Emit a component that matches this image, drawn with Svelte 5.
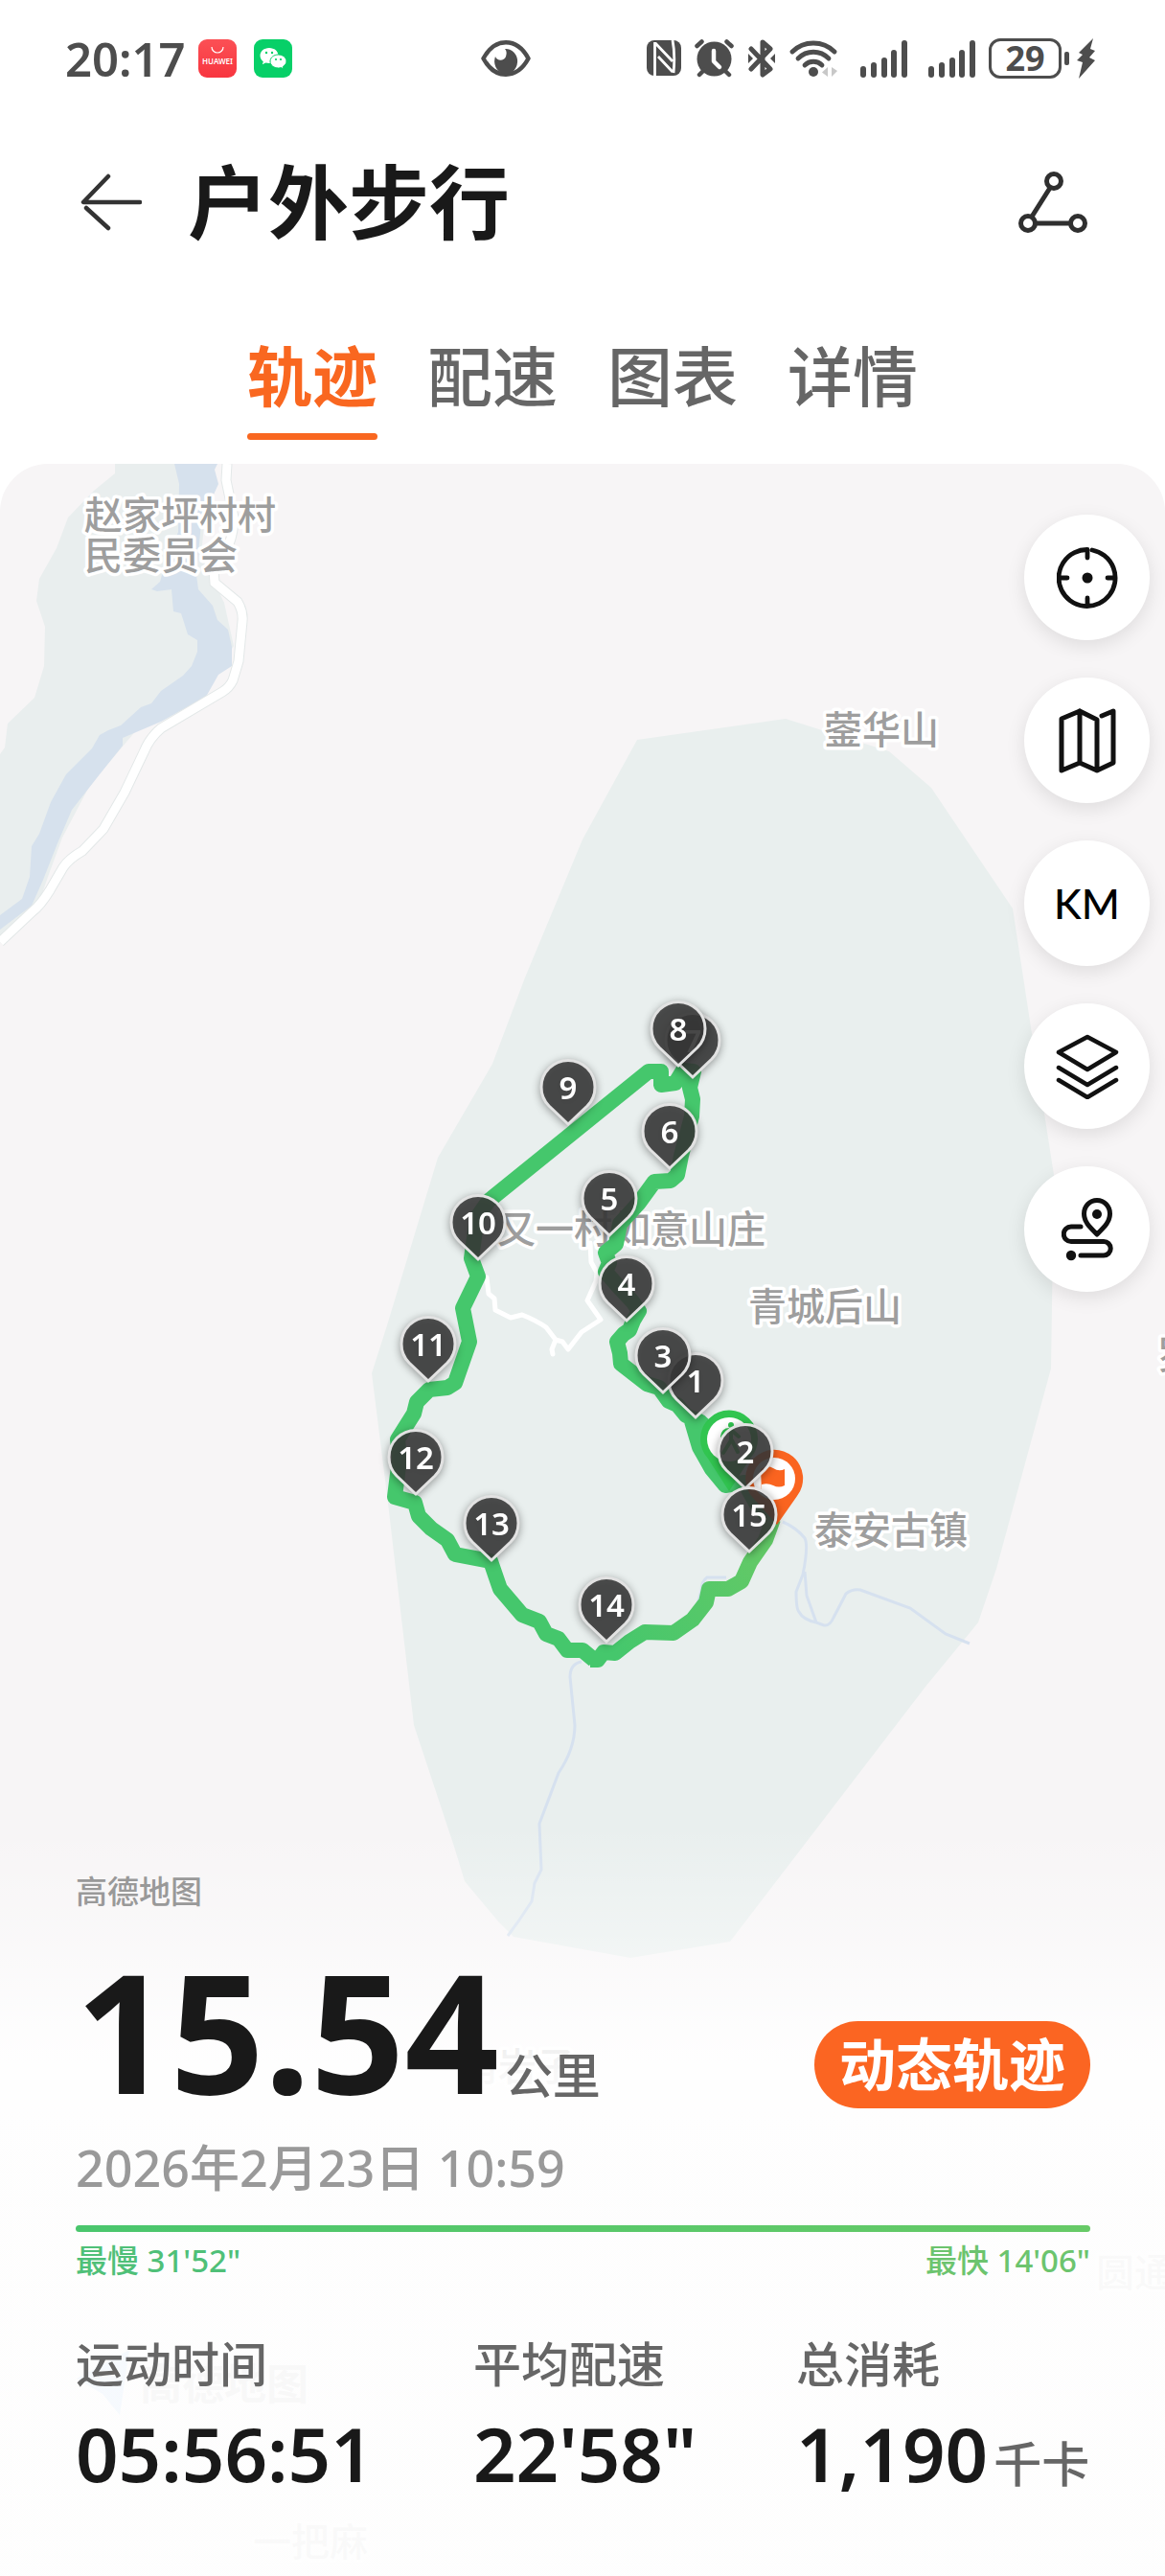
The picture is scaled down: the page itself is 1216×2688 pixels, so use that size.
<script lang="ts">
	const tabs = ["轨迹", "配速", "图表", "详情"];
	let activeTab = $state("轨迹");

	const signals = [
		{ x: 0, h: 12 },
		{ x: 11, h: 16 },
		{ x: 22, h: 21 },
		{ x: 32, h: 29 },
		{ x: 43, h: 39 },
	];

	const places = [
		{ name: "赵家坪村村", x: 88, y: 552 },
		{ name: "民委员会", x: 88, y: 594 },
		{ name: "蓥华山", x: 860, y: 776 },
		{ name: "又一村如意山庄", x: 519, y: 1297 },
		{ name: "青城后山", x: 781, y: 1378 },
		{ name: "泰安古镇", x: 850, y: 1611 },
		{ name: "罗家山", x: 1208, y: 1428 },
		{ name: "角岩子", x: 480, y: 2171 },
		{ name: "圆通寺", x: 1144, y: 2386 },
		{ name: "一把麻", x: 264, y: 2667 },
	];

	const kilometres = [
		{ n: 1, x: 726, y: 1442 },
		{ n: 2, x: 778, y: 1516 },
		{ n: 3, x: 692, y: 1416 },
		{ n: 4, x: 654, y: 1341 },
		{ n: 5, x: 636, y: 1252 },
		{ n: 6, x: 699, y: 1182 },
		{ n: 7, x: 723, y: 1087 },
		{ n: 8, x: 708, y: 1075 },
		{ n: 9, x: 593, y: 1136 },
		{ n: 10, x: 499, y: 1277 },
		{ n: 11, x: 447, y: 1404 },
		{ n: 12, x: 434, y: 1522 },
		{ n: 13, x: 513, y: 1591 },
		{ n: 14, x: 633, y: 1676 },
		{ n: 15, x: 782, y: 1582 },
	];

	const stats = [
		{ label: "运动时间", value: "05:56:51", unit: "" },
		{ label: "平均配速", value: "22'58\"", unit: "" },
		{ label: "总消耗", value: "1,190", unit: "千卡" },
	];
</script>

<svelte:head>
	<title>户外步行</title>
</svelte:head>

<main class="screen">
	<div class="status">
		<span class="clock">20:17</span>
		<svg class="app-icon" viewBox="0 0 40 40">
			<defs>
				<linearGradient id="red" x2="0" y2="1">
					<stop offset="0" stop-color="#fb5055" />
					<stop offset="1" stop-color="#f8353f" />
				</linearGradient>
			</defs>
			<rect width="40" height="40" rx="9" fill="url(#red)" />
			<path d="M14 8a6 6 0 0 0 12 0" fill="none" stroke="#fff" stroke-width="1.2" />
			<text class="tiny" x="20" y="26" text-anchor="middle">HUAWEI</text>
		</svg>
		<svg class="app-icon spaced" viewBox="0 0 40 40">
			<rect width="40" height="40" rx="9" fill="#07d068" />
			<path d="M16 9c-5.500 0-9.500 3.600-9.500 8 0 2.600 1.300 4.700 3.300 6.200l-1 3 3.500-1.700c1.200.3 2.400.5 3.700.5 5.500 0 9.500-3.600 9.500-8s-4-8-9.500-8z" fill="#fff" />
			<path d="M25.500 16c-4.700 0-8.500 3.100-8.500 7s3.800 7 8.500 7c1.100 0 2.100-.1 3-.5l2.500 1.600-.6-2.700c2.200-1.300 3.600-3.200 3.600-5.400 0-3.900-3.800-7-8.500-7z" fill="#fff" stroke="#07cc66" stroke-width="1" />
			<g fill="#07d068">
				<circle cx="13" cy="14" r="1.200" />
				<circle cx="19" cy="14" r="1.200" />
				<circle cx="23" cy="21" r="1.100" />
				<circle cx="28" cy="21" r="1.100" />
			</g>
		</svg>
		<svg class="eye" viewBox="0 0 52 38">
			<path d="M2.500 19C9 7 17 2.300 26 2.300S43 7 49.500 19C43 31 35 35.700 26 35.700S9 31 2.500 19z" fill="none" stroke="#4d4d4d" stroke-width="4.500" stroke-linejoin="round" />
			<path d="M25 9a12 13 0 1 1-10 8c2 5 9 5 11 0 1-3 1-6-1-8z" fill="#4d4d4d" />
		</svg>

		<div class="status-right">
			<svg width="36" height="38" viewBox="0 0 36 38">
				<rect width="36" height="37" rx="8" fill="#4d4d4d" />
				<path d="M8.500 2v36M9 3l18 19M12 17l15 16M27 0c2 10 2 24 1 34" fill="none" stroke="#fff" stroke-width="2.800" />
			</svg>
			<svg width="41" height="40" viewBox="0 0 41 40">
				<circle cx="20.500" cy="20.500" r="18" fill="#4d4d4d" />
				<path d="M2.500 7 7.500 2.500M33.500 2.500l5 4.500M5 37l5-5M36 37l-5-5" stroke="#4d4d4d" stroke-width="4.500" stroke-linecap="round" />
				<path d="M20 12v11l6 6" fill="none" stroke="#fff" stroke-width="4.500" stroke-linecap="round" stroke-linejoin="round" />
			</svg>
			<svg width="30" height="40" viewBox="0 0 28 40">
				<path d="m3 10 20 21-8 6V3l8 7L3 31" fill="none" stroke="#4d4d4d" stroke-width="5" stroke-linecap="round" stroke-linejoin="round" />
				<path d="M0 15v10l5-5zM28 15v10l-5-5z" fill="#4d4d4d" />
			</svg>
			<svg width="52" height="40" viewBox="0 0 52 40">
				<g fill="none" stroke="#4d4d4d" stroke-width="4.800" stroke-linecap="round">
					<path d="M3 13C15 1 35 1 47 13" />
					<path d="M9 20c9-9 23-9 32 0" />
					<path d="M16 27c5-5 13-5 18 0" />
				</g>
				<circle cx="25" cy="34" r="5" fill="#4d4d4d" />
				<path d="M40 29v10l-6-4.500zM44 29v10l6-6z" fill="#c8c8c8" />
			</svg>
			{#each [1, 2] as sim (sim)}
				<svg class="signal" width="49" height="39" viewBox="0 0 49 39">
					{#each signals as bar (bar.x)}
						<rect x={bar.x} y={39 - bar.h} width="6" height={bar.h} rx="3" fill="#4d4d4d" />
					{/each}
				</svg>
			{/each}
			<div class="battery">
				<span class="battery-level">29</span>
				<span class="battery-nub"></span>
				<svg width="20" height="42" viewBox="0 0 20 42">
					<path d="M17 0 2 15l4 2-6 6 6 2-4 17 17-19-6-3 6-7-5-2z" fill="#4d4d4d" />
				</svg>
			</div>
		</div>
	</div>

	<header class="title-bar">
		<button class="icon-button" aria-label="返回">
			<svg width="64" height="60" viewBox="0 0 64 60">
				<path d="M29 3 3 30h59M6 36l23 21" fill="none" stroke="#333" stroke-width="4.500" stroke-linecap="round" stroke-linejoin="round" />
			</svg>
		</button>
		<h1>户外步行</h1>
		<button class="icon-button" aria-label="分享">
			<svg width="72" height="65" viewBox="0 0 72 65" fill="none" stroke="#2f2f2f" stroke-width="5">
				<circle cx="37" cy="10" r="7.500" />
				<circle cx="10" cy="54" r="7.500" />
				<circle cx="62" cy="54" r="7.500" />
				<path d="M33 17 14 47M18 54h36" />
			</svg>
		</button>
	</header>

	<nav class="tabs">
		{#each tabs as tab (tab)}
			<button class="tab" class:active={tab === activeTab} onclick={() => (activeTab = tab)}>
				{tab}
			</button>
		{/each}
	</nav>

	<section class="stage">
		<svg class="map" viewBox="0 484 1216 2204">
			<rect y="484" width="1216" height="2204" fill="#f7f5f6" />

			<!-- river valley -->
			<path d="M120 484v10L98 512 71 540 59 572 41 604l-3 23 9 27-1 41-10 33-28 27-3 25-5 7v191l38-28 12-35 15-41 29-55 55-65 75-50 20-30-10-45-24-50 12-122z" fill="#e9eeee" />
			<path d="M182 484l5 21-1 50-17 45-2 7-9 8 6 2 15-2 2 23 8 2 7 22 10 6v12l-6 15-9 10-23 16-10 13-11 4-21 19-13 5-9 5-8 14-27 27-16 29-12 33-8 13-2 32-8 23-23 17v15l33-25 12-27 15-38 15-35 29-37 24-30v-8l40-17 47-26 13-23 14-9v-20l-4-18-11-10-5-15-15-17-2-15 5-55 18-40-4-15 3-6z" fill="#d6e1ed" />
			<path d="M237 484l-1 17 8 39q0 30-21 54l1 14 24 20q6 10 5 20l-4 42-6 20q-4 8-11 12l-64 38q-12 10-18 25l-20 42-22 38-22 23q-14 8-20 17l-14 24q-10 16-18 22L0 983" fill="none" stroke="#e3e8e8" stroke-width="11" />
			<path d="M237 484l-1 17 8 39q0 30-21 54l1 14 24 20q6 10 5 20l-4 42-6 20q-4 8-11 12l-64 38q-12 10-18 25l-20 42-22 38-22 23q-14 8-20 17l-14 24q-10 16-18 22L0 983" fill="none" stroke="#fff" stroke-width="9" />

			<!-- mountain park -->
			<path d="M665 772 820 750 928 784 972 822 1057 948 1076 1072 1100 1226 1097 1428 1040 1637 1021 1693 966 1760 762 2026 658 2043 536 2021 520 2005 485 1963 475 1930 432 1800 404 1560 388 1433 404 1383 457 1208 514 1110 548 1020 608 876z" fill="#e9efee" />

			<g fill="none" stroke="#d6e1ef" stroke-width="3">
				<path d="M817 1588q14 6 23 17 4 8-2 38l-7 18q0 18 3 21 4 8 18 11l8 3q6 1 10-8l13-25q6-5 15-4l52 19 37 27 25 10M840 1640l2 25 10 28M758 1646h-20q-6 4-6 14l-5 17M607 1734q-12 2-12 16l5 50q0 25-17 50l-20 53 2 48-7 14-3 19-14 21-11 15" />
			</g>

			{#each places as place (place.name)}
				<text class="place" x={place.x} y={place.y}>{place.name}</text>
			{/each}

			<path d="M508 1333l2 17 6 5 1 12 16 8 12-3q15 6 25 13l10 13-4 10 1 5M580 1398l7 2 6 8 14-18 20-13-14-20 9-20 1-9-6-11-1-20" fill="none" stroke="#fff" stroke-width="5" stroke-linejoin="round" stroke-linecap="round" />

			<!-- recorded track -->
			<defs>
				<linearGradient id="pace" gradientUnits="userSpaceOnUse" x1="640" y1="1720" x2="790" y2="1620">
					<stop offset="0" stop-color="#45c76c" />
					<stop offset="1" stop-color="#62c967" />
				</linearGradient>
			</defs>
			<path
				class="track"
				d="M743 1495 730 1483 716 1477 707 1466 698 1462 688 1448 675 1444 648 1423 647 1412 644 1400 651 1392 657 1388 661 1378 667 1368 660 1358 645 1342 632 1327 636 1318 632 1307 643 1298 647 1277 667 1255 683 1233 700 1232 707 1226 711 1206 716 1187 722 1165 723 1147 720 1135 724 1118 713 1117 705 1130 690 1132 690 1118 677 1118 510 1253 498 1270 492 1313 499 1332 483 1365 490 1400 475 1443 467 1448 448 1450 435 1463 432 1475 415 1502 417 1522 412 1562 433 1568 437 1582 450 1595 467 1607 475 1622 512 1629 522 1658 545 1685 563 1692 570 1705 583 1710 592 1722 608 1722 620 1732"
			/>
			<path class="track" d="M722 1483 730 1510 743 1533 757 1550 777 1547 790 1570 808 1590" />
			<path class="track end" d="M616 1732h8l6-8 12 1 15-12 16-10 30 1 20-14 14-18 3-14h20l14-8 9-20 16-23 8-22" />

			<!-- start and finish pins -->
			<g transform="translate(761 1501)">
				<path d="M0 55-22 21A30 30 0 1 1 22 21z" fill="#31c550" />
				<circle cy="1" r="23" fill="#fff" />
				<circle cx="2" cy="-14" r="3" fill="#31c550" />
				<path d="M-7-2q1-8 9-7l8 7M2-8v10l-8 13M3 2l6 12" fill="none" stroke="#31c550" stroke-width="4" stroke-linecap="round" />
			</g>
			<g transform="translate(808 1543)">
				<path d="M3 48-22 20A30 30 0 1 1 24 18z" fill="#fa6420" />
				<circle r="22" fill="#fff" />
				<path d="M-14-10q7-5 13-1t12 1V7q-6 3-12 0t-12-1v9" fill="#fa6420" />
			</g>

			{#each kilometres as km (km.n)}
				<g class="marker" transform="translate({km.x} {km.y})">
					<path d="M0 37-20 18A28 28 0 1 1 20 18z" />
					<text y="11" text-anchor="middle">{km.n}</text>
				</g>
			{/each}

			<!-- map provider mark -->
			<path d="M80 2482l55-30-10 68-18-22z" fill="#5fa8f5" />
			<text class="provider" x="146" y="2504">高德地图</text>
		</svg>

		<div class="tools">
			<button aria-label="定位">
				<svg width="64" height="64" viewBox="0 0 64 64" stroke-width="4.800">
					<path d="M37 3A29.500 29.500 0 1 1 32 2.500V11M3 32h8M53 32h8M32 53v8" />
					<circle class="dot" cx="32" cy="32" r="5.500" />
				</svg>
			</button>
			<button aria-label="地图类型">
				<svg width="62" height="68" viewBox="0 0 62 68" stroke-width="5">
					<path d="M23 3 4 11v54l19-8 18 8 17-8V3l-12 5M23 3v54M23 3l18 9v53" />
				</svg>
			</button>
			<button class="km">KM</button>
			<button aria-label="图层">
				<svg width="66" height="68" viewBox="0 0 66 68" stroke-width="4.500">
					<path d="M33 3 63 19 33 37 3 19zM3 35l30 18 30-18M3 48l30 18 30-18" />
				</svg>
			</button>
			<button aria-label="路线">
				<svg width="54" height="66" viewBox="0 0 54 66" stroke-width="5">
					<path d="M37 38C29 30 23.500 25 23.500 16.500a13.500 14 0 0 1 27 0C50.500 25 45 30 37 38zM20 30H10a7.500 7.500 0 0 0 0 15.500h34a7.200 7.200 0 0 1 0 14.500H20" />
					<circle class="dot" cx="37" cy="17" r="5" />
					<circle class="dot" cx="10" cy="60" r="5.200" />
				</svg>
			</button>
		</div>

		<div class="sheet">
			<p class="credit">高德地图</p>

			<div class="distance-row">
				<p class="distance">15.54<span class="unit">公里</span></p>
				<button class="replay">动态轨迹</button>
			</div>
			<p class="date">2026年2月23日 10:59</p>

			<div class="pace-bar"></div>
			<div class="pace-range">
				<span class="slowest">最慢 31'52"</span>
				<span class="fastest">最快 14'06"</span>
			</div>

			<dl class="stats">
				{#each stats as stat (stat.label)}
					<div>
						<dt>{stat.label}</dt>
						<dd>
							{stat.value}{#if stat.unit}<span class="unit">{stat.unit}</span>{/if}
						</dd>
					</div>
				{/each}
			</dl>
		</div>
	</section>
</main>

<style>
	:global(body) {
		background: #fff;
	}

	.screen {
		color: #191919;
		font-family: "Noto Sans", "Noto Sans CJK SC", sans-serif;
	}

	button {
		padding: 0;
		border: 0;
		background: none;
		color: inherit;
		font-family: inherit;
		cursor: pointer;
	}

	h1,
	p,
	dl,
	dd {
		margin: 0;
	}

	svg {
		display: block;
		flex: none;
	}

	.status {
		display: flex;
		align-items: center;
		height: 122px;
		padding: 0 72px 0 68px;
		color: #4d4d4d;
	}

	.clock {
		min-width: 139px;
		font-size: 49px;
		font-weight: 600;
		line-height: 60px;
	}

	.app-icon {
		width: 40px;
		height: 40px;
	}

	.app-icon.spaced {
		margin-left: 18px;
	}

	.tiny {
		fill: #fff;
		font-size: 8px;
		font-weight: 600;
	}

	.eye {
		width: 52px;
		height: 38px;
		margin-left: 197px;
	}

	.status-right {
		display: flex;
		align-items: center;
		gap: 14px;
		margin-left: auto;
	}

	.signal {
		margin-left: 8px;
	}

	.battery {
		display: flex;
		align-items: center;
	}

	.battery-level {
		box-sizing: border-box;
		width: 76px;
		height: 42px;
		border: 3px solid #4d4d4d;
		border-radius: 12px;
		font-size: 36px;
		font-weight: 700;
		line-height: 36px;
		text-align: center;
	}

	.battery-nub {
		width: 5px;
		height: 14px;
		margin: 0 8px 0 3px;
		border-radius: 2px;
		background: #4d4d4d;
	}

	.title-bar {
		display: flex;
		align-items: center;
		height: 178px;
		padding: 0 81px 0 84px;
	}

	.title-bar h1 {
		flex: 1;
		margin-left: 48px;
		font-size: 84px;
		font-weight: 700;
		line-height: 100px;
	}

	.tabs {
		display: flex;
		justify-content: center;
		gap: 52px;
		padding: 53px 0 25px;
	}

	.tab {
		color: #666;
		font-size: 68px;
		font-weight: 500;
		line-height: 80px;
	}

	.tab::after {
		content: "";
		display: block;
		height: 7px;
		margin-top: 19px;
		border-radius: 4px;
	}

	.tab.active {
		color: #f96720;
		font-weight: 700;
	}

	.tab.active::after {
		background: #f96720;
	}

	/* map, tool column and sheet share a single cell */
	.stage {
		display: grid;
		overflow: hidden;
		border-radius: 50px 50px 0 0;
	}

	.stage > * {
		grid-area: 1 / 1;
	}

	.map {
		width: 100%;
		height: auto;
	}

	.place {
		fill: #9e9e9e;
		font-size: 40px;
		font-weight: 500;
		paint-order: stroke;
		stroke: #fff;
		stroke-linejoin: round;
		stroke-width: 7px;
	}

	.provider {
		fill: #888;
		font-size: 44px;
		font-weight: 700;
	}

	.track {
		fill: none;
		stroke: #45c76c;
		stroke-linejoin: round;
		stroke-width: 16px;
	}

	.track.end {
		stroke: url(#pace);
	}

	.marker {
		filter: drop-shadow(0 2px 4px rgb(0 0 0 / 40%));
	}

	.marker path {
		fill: rgb(56 56 56 / 86%);
		stroke: #e2e2e2;
		stroke-width: 3px;
	}

	.marker text {
		fill: #fff;
		font-size: 33px;
		font-weight: 600;
	}

	.tools {
		display: flex;
		flex-direction: column;
		gap: 39px;
		align-self: start;
		justify-self: end;
		padding: 53px 16px;
	}

	.tools button {
		display: grid;
		place-items: center;
		width: 131px;
		height: 131px;
		border-radius: 50%;
		background: #fff;
		box-shadow: 0 6px 20px rgb(0 0 0 / 10%);
	}

	.tools svg {
		fill: none;
		stroke: #111;
		stroke-linecap: round;
		stroke-linejoin: round;
	}

	.tools .dot {
		fill: #111;
		stroke: none;
	}

	.tools .km {
		color: #000;
		font-family: Lato, "Noto Sans", sans-serif;
		font-size: 43px;
		font-weight: 500;
	}

	.sheet {
		align-self: end;
		padding: 50px 78px 72px 79px;
		background: linear-gradient(
			rgb(255 255 255 / 0%),
			rgb(255 255 255 / 35%) 120px,
			rgb(255 255 255 / 75%) 200px,
			rgb(255 255 255 / 93%) 260px,
			rgb(254 254 254 / 95%) 340px
		);
	}

	.credit {
		color: #999;
		font-size: 33px;
		font-weight: 500;
		line-height: 40px;
	}

	.distance-row {
		display: flex;
		align-items: center;
		justify-content: space-between;
		height: 160px;
		margin-top: 68px;
	}

	.distance {
		font-size: 172px;
		font-weight: 700;
		line-height: 160px;
	}

	.unit {
		margin-left: 6px;
		color: #666;
		font-size: 50px;
		font-weight: 500;
	}

	.replay {
		width: 288px;
		height: 91px;
		margin-top: 24px;
		border-radius: 46px;
		background: #fb6522;
		color: #fff;
		font-size: 59px;
		font-weight: 700;
		line-height: 91px;
	}

	.date {
		margin-top: 8px;
		color: #999;
		font-size: 52px;
		font-weight: 500;
		line-height: 64px;
	}

	.pace-bar {
		height: 7px;
		margin-top: 28px;
		border-radius: 4px;
		background: linear-gradient(90deg, #4ac66d, #67ca67);
	}

	.pace-range {
		display: flex;
		justify-content: space-between;
		margin-top: 10px;
		font-size: 33px;
		font-weight: 500;
		line-height: 40px;
	}

	.slowest {
		color: #4fc078;
	}

	.fastest {
		color: #6cc46e;
	}

	.stats {
		display: grid;
		grid-template-columns: 415fr 337fr 307fr;
		margin-top: 56px;
	}

	.stats dt {
		color: #666;
		font-size: 50px;
		font-weight: 500;
		line-height: 64px;
	}

	.stats dd {
		margin-top: 16px;
		font-size: 78px;
		font-weight: 600;
		line-height: 90px;
		white-space: nowrap;
	}
</style>
